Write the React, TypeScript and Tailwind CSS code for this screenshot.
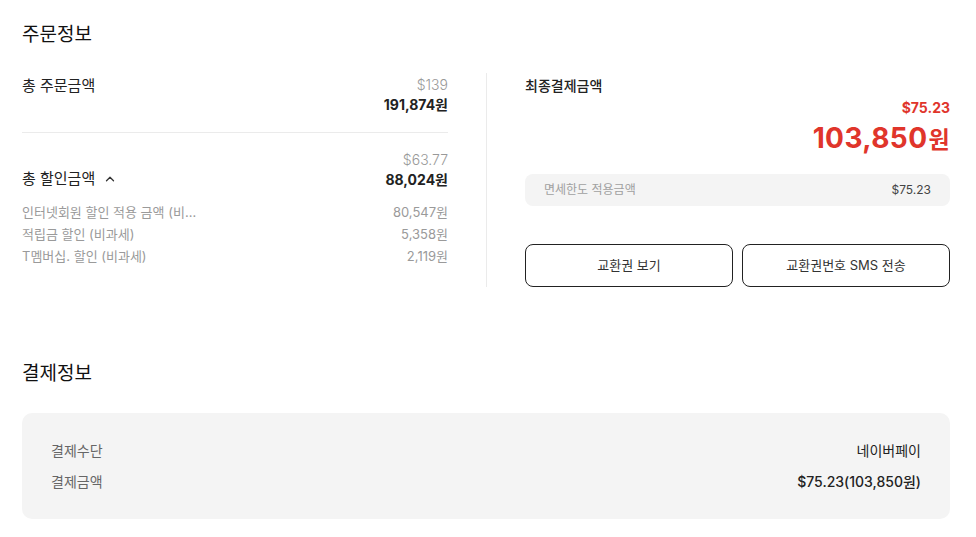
import { ChevronUp } from "lucide-react";

const FONT = "font-['Inter','Noto_Sans_CJK_KR',sans-serif]";

const DISCOUNTS = [
  { label: "인터넷회원 할인 적용 금액 (비…", value: "80,547원" },
  { label: "적립금 할인 (비과세)", value: "5,358원" },
  { label: "T멤버십. 할인 (비과세)", value: "2,119원" },
];

function OrderSummary() {
  return (
    <div className="w-[426px] shrink-0">
      {/* Total order */}
      <div className="flex justify-between pb-[17px] border-b border-[#ebebeb]">
        <span className="text-[15px] text-[#222] leading-[22px] mt-[2px]">총 주문금액</span>
        <div className="flex flex-col items-end pt-[2px]">
          <span className="text-[14px] text-[#999] leading-[20px] font-light">$139</span>
          <span className="text-[14px] text-[#222] font-bold leading-[20px]">191,874원</span>
        </div>
      </div>

      {/* Total discount */}
      <div className="flex justify-between items-end pt-[17px]">
        <div className="flex items-center gap-[8px]">
          <span className="text-[15px] text-[#222] leading-[22px]">총 할인금액</span>
          <ChevronUp className="w-[14px] h-[14px] text-[#333]" strokeWidth={2.2} />
        </div>
        <div className="flex flex-col items-end">
          <span className="text-[14px] text-[#999] leading-[20px] font-light">$63.77</span>
          <span className="text-[14px] text-[#222] font-bold leading-[20px]">88,024원</span>
        </div>
      </div>

      <div className="mt-[11px] flex flex-col">
        {DISCOUNTS.map((d) => (
          <div key={d.label} className="flex justify-between text-[13px] leading-[22px] text-[#9a9a9a]">
            <span>{d.label}</span>
            <span>{d.value}</span>
          </div>
        ))}
      </div>
    </div>
  );
}

function FinalPayment() {
  return (
    <div className="flex-1">
      <div className="text-[14px] font-medium text-[#222] leading-[22px] mt-[2px]">최종결제금액</div>
      <div className="flex flex-col items-end">
        <span className="text-[14px] font-bold text-[#e0352b] leading-[20px] mt-[1px]">$75.23</span>
        <span className="text-[28px] font-bold text-[#e0352b] leading-[40px] tracking-[0.4px]">
          103,850<span className="text-[23px] font-semibold ml-[1px]">원</span>
        </span>
      </div>
      <div className="mt-[14px] h-[32px] rounded-[8px] bg-[#f4f4f4] flex items-center justify-between px-[19px] text-[12px]">
        <span className="text-[#a0a0a0]">면세한도 적용금액</span>
        <span className="text-[#444]">$75.23</span>
      </div>
      <div className="mt-[38px] grid grid-cols-2 gap-[9px]">
        <button className="h-[43px] rounded-[8px] border border-[#222] bg-white text-[13px] text-[#333]">
          교환권 보기
        </button>
        <button className="h-[43px] rounded-[8px] border border-[#222] bg-white text-[13px] text-[#333]">
          교환권번호 SMS 전송
        </button>
      </div>
    </div>
  );
}

export default function App() {
  return (
    <div className={`${FONT} bg-white w-[976px] h-[537px] pl-[22px] pr-[26px] pt-[22px] text-[#222]`}>
      <h2 className="text-[19px] font-normal leading-[26px] text-[#111]">주문정보</h2>

      <div className="mt-[25px] flex">
        <OrderSummary />
        <div className="mx-[38px] w-px bg-[#ebebeb] h-[214px]" />
        <FinalPayment />
      </div>

      <h2 className="mt-[74px] text-[19px] font-normal leading-[26px] text-[#111]">결제정보</h2>

      <div className="mt-[26px] rounded-[10px] bg-[#f4f4f4] px-[29px] pt-[27px] pb-[26px] flex flex-col gap-[9px]">
        <div className="flex justify-between text-[14px] leading-[22px]">
          <span className="text-[#666]">결제수단</span>
          <span className="text-[#222]">네이버페이</span>
        </div>
        <div className="flex justify-between text-[14px] leading-[22px]">
          <span className="text-[#666]">결제금액</span>
          <span className="text-[#222] font-medium">$75.23(103,850원)</span>
        </div>
      </div>
    </div>
  );
}
